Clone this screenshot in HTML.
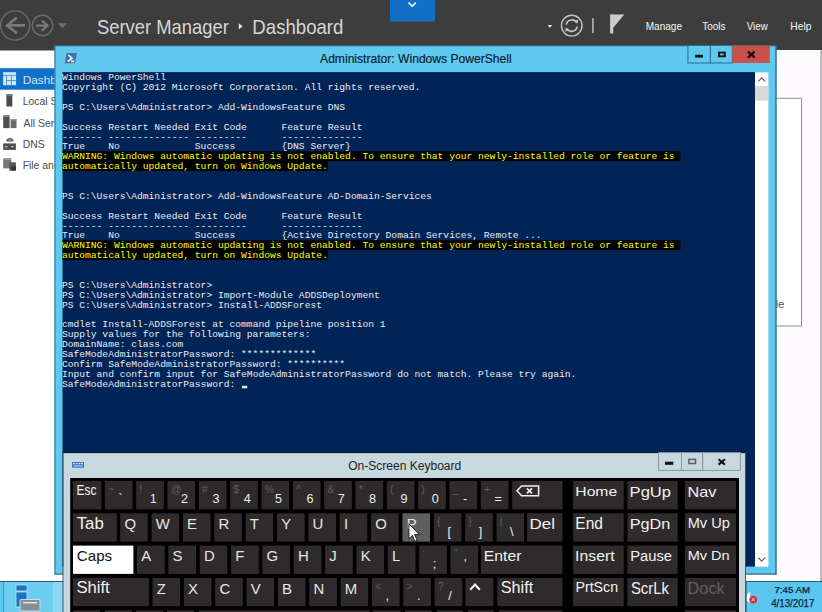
<!DOCTYPE html><html><head><meta charset="utf-8"><style>*{margin:0;padding:0}html,body{width:822px;height:612px;overflow:hidden;background:#fff}svg{display:block;font-family:"Liberation Sans",sans-serif}.m{font-family:"Liberation Mono",monospace}</style></head><body>
<svg width="822" height="612" viewBox="0 0 822 612">
<rect x="0.00" y="0.00" width="822.00" height="612.00" fill="#ffffff" />
<rect x="0.00" y="0.00" width="822.00" height="50.50" fill="#3e3d3d" />
<circle cx="15.1" cy="25.5" r="14.6" fill="none" stroke="#6b6b6b" stroke-width="1.4"/>
<path d="M7 25.4H25M16.8 17.5L7.2 25.4L16.8 33.3" fill="none" stroke="#7a7a7a" stroke-width="2.6" stroke-linejoin="miter"/>
<circle cx="42.5" cy="25.5" r="10.2" fill="none" stroke="#6b6b6b" stroke-width="1.4"/>
<path d="M36 25.6H48M41.8 20.6L47.6 25.6L41.8 30.6" fill="none" stroke="#7a7a7a" stroke-width="2.1"/>
<path d="M57.4 23.3H67.4L62.4 27.9Z" fill="#6f6f6f"/>
<text x="96.97" y="33.70" font-size="20.93" fill="#d6d6d6" textLength="131.80" lengthAdjust="spacingAndGlyphs" >Server Manager</text>
<path d="M238.8 23.2L242.7 26.35L238.8 29.5Z" fill="#e6e6e6"/>
<text x="252.36" y="33.60" font-size="20.78" fill="#d6d6d6" textLength="91.04" lengthAdjust="spacingAndGlyphs" >Dashboard</text>
<rect x="390.00" y="0.00" width="45.00" height="21.50" fill="#1170c6" />
<path d="M408.6 2.6L412.2 6.2L415.8 2.6" fill="none" stroke="#ffffff" stroke-width="1.5"/>
<path d="M547.7 25.1H552.2L549.95 27.7Z" fill="#e8e8e8"/>
<circle cx="571.75" cy="25.6" r="10.3" fill="none" stroke="#c4c4c4" stroke-width="1.4"/>
<path d="M566.3 24.6A5.6 5.6 0 0 1 576.6 22.6M577.2 26.6A5.6 5.6 0 0 1 566.9 28.6" fill="none" stroke="#c4c4c4" stroke-width="1.7"/>
<path d="M573.9 21.2L577.8 23.6L578.2 19.4Z M569.6 30L565.7 27.6L565.3 31.8Z" fill="#c4c4c4"/>
<rect x="592.20" y="18.20" width="1.40" height="14.80" fill="#c8c8c8" />
<rect x="610.10" y="14.40" width="3.10" height="19.10" fill="#cdcdcd" />
<path d="M613 14.4H624.3L613 28Z" fill="#cdcdcd"/>
<text x="645.77" y="29.50" font-size="10.32" fill="#f6f6f6" textLength="36.27" lengthAdjust="spacingAndGlyphs" >Manage</text>
<text x="702.17" y="29.50" font-size="10.32" fill="#f6f6f6" textLength="23.37" lengthAdjust="spacingAndGlyphs" >Tools</text>
<text x="746.75" y="29.50" font-size="10.32" fill="#f6f6f6" textLength="21.02" lengthAdjust="spacingAndGlyphs" >View</text>
<text x="790.35" y="29.50" font-size="10.32" fill="#f6f6f6" textLength="21.07" lengthAdjust="spacingAndGlyphs" >Help</text>
<rect x="0.00" y="68.20" width="56.00" height="21.50" fill="#116fc5" />
<rect x="3.1" y="72.2" width="13" height="13" fill="#c9eafc"/><g fill="#4a7cb8"><rect x="3.1" y="74.9" width="13" height="0.8"/><rect x="6.1" y="75.5" width="0.8" height="9.7"/><rect x="10.9" y="75.5" width="0.8" height="9.7"/><rect x="6.1" y="80" width="10" height="0.8"/></g>
<text x="22.73" y="83.60" font-size="10.17" fill="#cfe6fa" textLength="57.64" lengthAdjust="spacingAndGlyphs" >Dashboard</text>
<text x="22.64" y="104.80" font-size="11.20" fill="#4a4a4a" textLength="58.47" lengthAdjust="spacingAndGlyphs" >Local Server</text>
<text x="23.47" y="127.00" font-size="11.20" fill="#4a4a4a" textLength="50.36" lengthAdjust="spacingAndGlyphs" >All Servers</text>
<text x="22.64" y="147.90" font-size="11.20" fill="#4a4a4a" textLength="21.99" lengthAdjust="spacingAndGlyphs" >DNS</text>
<text x="22.64" y="169.20" font-size="11.20" fill="#4a4a4a" textLength="119.27" lengthAdjust="spacingAndGlyphs" >File and Storage Services</text>
<rect x="6.4" y="94.2" width="5.9" height="12.3" fill="#4a4a4a"/><rect x="6.4" y="94.2" width="5.9" height="2" fill="#7a7a7a"/>
<rect x="3.2" y="115.3" width="6.4" height="12.8" fill="#505050"/><rect x="3.2" y="115.3" width="6.4" height="1.6" fill="#8a8a8a"/><rect x="10.6" y="119" width="5.9" height="9.1" fill="#6a6a6a"/><rect x="10.6" y="119" width="5.9" height="1.4" fill="#999"/>
<path d="M6.3 141.5A3.6 3.6 0 0 1 13.5 141.5Z" fill="#5a5a5a"/><circle cx="9.9" cy="140" r="1.6" fill="#888"/><rect x="3.2" y="143.4" width="12.7" height="6.5" fill="#4e4e4e"/><rect x="5" y="146.2" width="2.5" height="1" fill="#ddd"/><rect x="11.2" y="146.2" width="2.5" height="1" fill="#ddd"/>
<rect x="3.2" y="158.4" width="8" height="10" fill="#777"/><rect x="3.2" y="158.4" width="8" height="1.5" fill="#999"/><rect x="9.3" y="162.3" width="6.6" height="8.3" fill="#555"/><rect x="11.5" y="166.5" width="4.4" height="4.1" fill="#333"/>
<rect x="776.00" y="50.00" width="46.00" height="531.00" fill="#fdfbfd" />
<path d="M776 98.3H801.5V326H776" fill="#ffffff" stroke="#8f8f8f" stroke-width="1"/>
<text x="775.52" y="307.50" font-size="10.50" fill="#555555" textLength="8.98" lengthAdjust="spacingAndGlyphs" >le</text>
<rect x="820.20" y="50.50" width="1.80" height="530.50" fill="#b6b3b6" />
<rect x="54.50" y="45.80" width="722.00" height="528.70" fill="#60c9ef" />
<rect x="54.50" y="45.80" width="1.00" height="528.70" fill="#2f6f8f" />
<rect x="54.50" y="45.50" width="722.00" height="0.80" fill="#2f6f8f" />
<rect x="775.50" y="45.80" width="1.00" height="528.70" fill="#1f4a60" />
<rect x="54.50" y="573.60" width="722.00" height="0.90" fill="#1f4a60" />
<path d="M66.2 52.5H77.5L75.4 63.8H64.1Z" fill="#3577b0" stroke="#8cc4e6" stroke-width="0.8"/>
<path d="M68.3 55L72 58.2L67.7 61.5" fill="none" stroke="#ffffff" stroke-width="1.6"/>
<rect x="71.20" y="60.50" width="3.00" height="1.70" fill="#ffffff" />
<text x="320.07" y="63.40" font-size="13.23" fill="#0a1f2e" textLength="191.64" lengthAdjust="spacingAndGlyphs" stroke="#0a1f2e" stroke-width="0.2">Administrator: Windows PowerShell</text>
<rect x="687.9" y="45.5" width="22.5" height="17.5" fill="#60c9ef" stroke="#2b6f93" stroke-width="1"/>
<rect x="710.4" y="45.5" width="21.9" height="17.5" fill="#60c9ef" stroke="#2b6f93" stroke-width="1"/>
<rect x="732.30" y="45.50" width="37.50" height="17.50" fill="#c9504b" />
<rect x="695.20" y="54.80" width="7.80" height="2.80" fill="#101010" />
<rect x="719" y="52.6" width="5.8" height="3.7" fill="none" stroke="#101010" stroke-width="1.9"/>
<path d="M748 51.6L754.6 57.6M754.6 51.6L748 57.6" stroke="#101010" stroke-width="2.4"/>
<rect x="62.50" y="72.40" width="692.50" height="494.20" fill="#012456" />
<rect x="62.50" y="72.40" width="692.50" height="0.90" fill="#001c48" />
<text class="m" x="61.90" y="80.30" font-size="9.65" fill="#eeedf0" textLength="104.04" lengthAdjust="spacingAndGlyphs" xml:space="preserve">Windows PowerShell</text>
<text class="m" x="61.90" y="90.18" font-size="9.65" fill="#eeedf0" textLength="358.36" lengthAdjust="spacingAndGlyphs" xml:space="preserve">Copyright (C) 2012 Microsoft Corporation. All rights reserved.</text>
<text class="m" x="61.90" y="109.94" font-size="9.65" fill="#eeedf0" textLength="283.22" lengthAdjust="spacingAndGlyphs" xml:space="preserve">PS C:\Users\Administrator&gt; Add-WindowsFeature DNS</text>
<text class="m" x="61.90" y="129.70" font-size="9.65" fill="#eeedf0" textLength="300.56" lengthAdjust="spacingAndGlyphs" xml:space="preserve">Success Restart Needed Exit Code      Feature Result</text>
<text class="m" x="61.90" y="139.58" font-size="9.65" fill="#eeedf0" textLength="300.56" lengthAdjust="spacingAndGlyphs" xml:space="preserve">------- -------------- ---------      --------------</text>
<text class="m" x="61.90" y="149.46" font-size="9.65" fill="#eeedf0" textLength="289.00" lengthAdjust="spacingAndGlyphs" xml:space="preserve">True    No             Success        {DNS Server}</text>
<rect x="62.60" y="151.24" width="617.76" height="9.88" fill="#000000" />
<text class="m" x="61.90" y="159.34" font-size="9.65" fill="#ffff00" textLength="618.46" lengthAdjust="spacingAndGlyphs" xml:space="preserve">WARNING: Windows automatic updating is not enabled. To ensure that your newly-installed role or feature is </text>
<rect x="62.60" y="161.12" width="265.18" height="9.88" fill="#000000" />
<text class="m" x="61.90" y="169.22" font-size="9.65" fill="#ffff00" textLength="265.88" lengthAdjust="spacingAndGlyphs" xml:space="preserve">automatically updated, turn on Windows Update.</text>
<text class="m" x="61.90" y="198.86" font-size="9.65" fill="#eeedf0" textLength="369.92" lengthAdjust="spacingAndGlyphs" xml:space="preserve">PS C:\Users\Administrator&gt; Add-WindowsFeature AD-Domain-Services</text>
<text class="m" x="61.90" y="218.62" font-size="9.65" fill="#eeedf0" textLength="300.56" lengthAdjust="spacingAndGlyphs" xml:space="preserve">Success Restart Needed Exit Code      Feature Result</text>
<text class="m" x="61.90" y="228.50" font-size="9.65" fill="#eeedf0" textLength="300.56" lengthAdjust="spacingAndGlyphs" xml:space="preserve">------- -------------- ---------      --------------</text>
<text class="m" x="61.90" y="238.38" font-size="9.65" fill="#eeedf0" textLength="479.74" lengthAdjust="spacingAndGlyphs" xml:space="preserve">True    No             Success        {Active Directory Domain Services, Remote ...</text>
<rect x="62.60" y="240.16" width="617.76" height="9.88" fill="#000000" />
<text class="m" x="61.90" y="248.26" font-size="9.65" fill="#ffff00" textLength="618.46" lengthAdjust="spacingAndGlyphs" xml:space="preserve">WARNING: Windows automatic updating is not enabled. To ensure that your newly-installed role or feature is </text>
<rect x="62.60" y="250.04" width="265.18" height="9.88" fill="#000000" />
<text class="m" x="61.90" y="258.14" font-size="9.65" fill="#ffff00" textLength="265.88" lengthAdjust="spacingAndGlyphs" xml:space="preserve">automatically updated, turn on Windows Update.</text>
<text class="m" x="61.90" y="287.78" font-size="9.65" fill="#eeedf0" textLength="150.28" lengthAdjust="spacingAndGlyphs" xml:space="preserve">PS C:\Users\Administrator&gt;</text>
<text class="m" x="61.90" y="297.66" font-size="9.65" fill="#eeedf0" textLength="317.90" lengthAdjust="spacingAndGlyphs" xml:space="preserve">PS C:\Users\Administrator&gt; Import-Module ADDSDeployment</text>
<text class="m" x="61.90" y="307.54" font-size="9.65" fill="#eeedf0" textLength="260.10" lengthAdjust="spacingAndGlyphs" xml:space="preserve">PS C:\Users\Administrator&gt; Install-ADDSForest</text>
<text class="m" x="61.90" y="327.30" font-size="9.65" fill="#eeedf0" textLength="323.68" lengthAdjust="spacingAndGlyphs" xml:space="preserve">cmdlet Install-ADDSForest at command pipeline position 1</text>
<text class="m" x="61.90" y="337.18" font-size="9.65" fill="#eeedf0" textLength="248.54" lengthAdjust="spacingAndGlyphs" xml:space="preserve">Supply values for the following parameters:</text>
<text class="m" x="61.90" y="347.06" font-size="9.65" fill="#eeedf0" textLength="121.38" lengthAdjust="spacingAndGlyphs" xml:space="preserve">DomainName: class.com</text>
<text class="m" x="61.90" y="356.94" font-size="9.65" fill="#eeedf0" textLength="254.32" lengthAdjust="spacingAndGlyphs" xml:space="preserve">SafeModeAdministratorPassword: *************</text>
<text class="m" x="61.90" y="366.82" font-size="9.65" fill="#eeedf0" textLength="283.22" lengthAdjust="spacingAndGlyphs" xml:space="preserve">Confirm SafeModeAdministratorPassword: **********</text>
<text class="m" x="61.90" y="376.70" font-size="9.65" fill="#eeedf0" textLength="514.42" lengthAdjust="spacingAndGlyphs" xml:space="preserve">Input and confirm input for SafeModeAdministratorPassword do not match. Please try again.</text>
<text class="m" x="61.90" y="386.58" font-size="9.65" fill="#eeedf0" textLength="179.18" lengthAdjust="spacingAndGlyphs" xml:space="preserve">SafeModeAdministratorPassword: </text>
<rect x="241.88" y="385.78" width="5.38" height="2.50" fill="#d8f0d0" />
<rect x="755.00" y="72.40" width="13.40" height="494.20" fill="#ffffff" />
<rect x="755.00" y="86.00" width="13.40" height="14.60" fill="#d9d9d9" />
<path d="M758.3 81.3L761.7 77.9L765.1 81.3" fill="none" stroke="#606060" stroke-width="1.2"/>
<path d="M758.3 557.7L761.7 561.1L765.1 557.7" fill="none" stroke="#606060" stroke-width="1.2"/>
<rect x="755.00" y="553.40" width="13.40" height="0.50" fill="#e6e6e6" />
<rect x="0.00" y="581.00" width="822.00" height="31.00" fill="#5ac6ee" />
<rect x="0.00" y="581.00" width="822.00" height="1.00" fill="#2c5b74" />
<rect x="3.00" y="582.00" width="51.00" height="30.00" fill="#6ccdf0" />
<rect x="3.00" y="582.00" width="0.80" height="30.00" fill="#3f88ad" />
<rect x="53.20" y="582.00" width="0.80" height="30.00" fill="#9fdcf4" />
<rect x="54.00" y="582.00" width="9.50" height="30.00" fill="#8fd6f2" />
<rect x="16" y="585" width="11" height="6" fill="#1d73c6" stroke="#b9e4f8" stroke-width="0.8"/><rect x="16" y="592" width="11" height="15" fill="#1d73c6" stroke="#b9e4f8" stroke-width="0.8"/>
<rect x="20" y="599.5" width="20" height="11.5" rx="1" fill="#8a8f94" stroke="#d5eef9" stroke-width="0.8"/><rect x="23" y="602" width="14" height="1.4" fill="#e8e8e8"/>
<text x="774.51" y="593.40" font-size="8.72" fill="#08263a" textLength="35.70" lengthAdjust="spacingAndGlyphs" stroke="#08263a" stroke-width="0.25">7:45 AM</text>
<text x="771.18" y="607.40" font-size="10.17" fill="#08263a" textLength="43.22" lengthAdjust="spacingAndGlyphs" stroke="#08263a" stroke-width="0.25">4/13/2017</text>
<path d="M746.6 594.5L750.2 591.8V603L746.6 600.5Z" fill="#ffffff"/><rect x="745.4" y="581" width="1.1" height="31" fill="#35566a"/><circle cx="753.2" cy="599.6" r="3.9" fill="#c8343c"/><path d="M751.6 598L754.8 601.2M754.8 598L751.6 601.2" stroke="#ffd8d8" stroke-width="1"/>
<rect x="63.20" y="452.60" width="682.60" height="159.40" fill="#c7d8df" />
<rect x="63.20" y="452.10" width="682.60" height="1.00" fill="#050d18" />
<rect x="745.20" y="452.10" width="0.80" height="159.90" fill="#2a3a44" />
<rect x="62.60" y="452.10" width="0.80" height="159.90" fill="#2a3a44" />
<text x="348.23" y="469.70" font-size="12.65" fill="#1c252b" textLength="113.04" lengthAdjust="spacingAndGlyphs" >On-Screen Keyboard</text>
<rect x="72" y="462" width="12" height="5.7" fill="#3a7ac8"/><g fill="#cfe6fb"><rect x="73" y="463" width="1.8" height="1.2"/><rect x="75.8" y="463" width="1.8" height="1.2"/><rect x="78.6" y="463" width="1.8" height="1.2"/><rect x="81.2" y="463" width="1.8" height="1.2"/><rect x="73.5" y="465.2" width="9" height="1.3" fill="#9cc8f2"/></g>
<rect x="658.5" y="452.6" width="23" height="17.8" fill="#c7d8df" stroke="#8b969d" stroke-width="1"/>
<rect x="681.5" y="452.6" width="21.2" height="17.8" fill="#c7d8df" stroke="#8b969d" stroke-width="1"/>
<rect x="702.7" y="452.6" width="37.7" height="17.8" fill="#c7d8df" stroke="#8b969d" stroke-width="1"/>
<rect x="665.00" y="461.70" width="8.30" height="3.10" fill="#121212" />
<rect x="688.9" y="459.4" width="6.6" height="4.1" fill="none" stroke="#606060" stroke-width="1.5"/>
<path d="M718.6 459.2L724.9 464.6M724.9 459.2L718.6 464.6" stroke="#121212" stroke-width="2.1"/>
<rect x="70.20" y="478.00" width="668.80" height="134.00" fill="#000000" />
<rect x="73.00" y="481.00" width="28.40" height="28.30" fill="#2f2b2c" />
<text x="76.62" y="495.30" font-size="15.12" fill="#f2f2f2" textLength="19.80" lengthAdjust="spacingAndGlyphs" >Esc</text>
<rect x="104.83" y="481.00" width="27.70" height="28.30" fill="#2f2b2c" />
<text x="118.43" y="503.40" font-size="12.6" fill="#ececec">`</text>
<text x="108.03" y="492.80" font-size="10.5" fill="#5e5e5e">~</text>
<rect x="136.16" y="481.00" width="27.70" height="28.30" fill="#2f2b2c" />
<text x="149.76" y="503.40" font-size="12.6" fill="#ececec">1</text>
<text x="139.36" y="492.80" font-size="10.5" fill="#5e5e5e">!</text>
<rect x="167.49" y="481.00" width="27.70" height="28.30" fill="#2f2b2c" />
<text x="181.09" y="503.40" font-size="12.6" fill="#ececec">2</text>
<text x="170.69" y="492.80" font-size="10.5" fill="#5e5e5e">@</text>
<rect x="198.82" y="481.00" width="27.70" height="28.30" fill="#2f2b2c" />
<text x="212.42" y="503.40" font-size="12.6" fill="#ececec">3</text>
<text x="202.02" y="492.80" font-size="10.5" fill="#5e5e5e">#</text>
<rect x="230.15" y="481.00" width="27.70" height="28.30" fill="#2f2b2c" />
<text x="243.75" y="503.40" font-size="12.6" fill="#ececec">4</text>
<text x="233.35" y="492.80" font-size="10.5" fill="#5e5e5e">$</text>
<rect x="261.48" y="481.00" width="27.70" height="28.30" fill="#2f2b2c" />
<text x="275.08" y="503.40" font-size="12.6" fill="#ececec">5</text>
<text x="264.68" y="492.80" font-size="10.5" fill="#5e5e5e">%</text>
<rect x="292.81" y="481.00" width="27.70" height="28.30" fill="#2f2b2c" />
<text x="306.41" y="503.40" font-size="12.6" fill="#ececec">6</text>
<text x="296.01" y="492.80" font-size="10.5" fill="#5e5e5e">^</text>
<rect x="324.14" y="481.00" width="27.70" height="28.30" fill="#2f2b2c" />
<text x="337.74" y="503.40" font-size="12.6" fill="#ececec">7</text>
<text x="327.34" y="492.80" font-size="10.5" fill="#5e5e5e">&amp;</text>
<rect x="355.47" y="481.00" width="27.70" height="28.30" fill="#2f2b2c" />
<text x="369.07" y="503.40" font-size="12.6" fill="#ececec">8</text>
<text x="358.67" y="492.80" font-size="10.5" fill="#5e5e5e">*</text>
<rect x="386.80" y="481.00" width="27.70" height="28.30" fill="#2f2b2c" />
<text x="400.40" y="503.40" font-size="12.6" fill="#ececec">9</text>
<text x="390.00" y="492.80" font-size="10.5" fill="#5e5e5e">(</text>
<rect x="418.13" y="481.00" width="27.70" height="28.30" fill="#2f2b2c" />
<text x="431.73" y="503.40" font-size="12.6" fill="#ececec">0</text>
<text x="421.33" y="492.80" font-size="10.5" fill="#5e5e5e">)</text>
<rect x="449.46" y="481.00" width="27.70" height="28.30" fill="#2f2b2c" />
<text x="463.06" y="503.40" font-size="12.6" fill="#ececec">-</text>
<text x="452.66" y="492.80" font-size="10.5" fill="#5e5e5e">_</text>
<rect x="480.79" y="481.00" width="27.70" height="28.30" fill="#2f2b2c" />
<text x="494.39" y="503.40" font-size="12.6" fill="#ececec">=</text>
<text x="483.99" y="492.80" font-size="10.5" fill="#5e5e5e">+</text>
<rect x="512.20" y="481.00" width="50.30" height="28.30" fill="#2f2b2c" />
<path d="M517 490.85L521.6 485.9H538.6V495.8H521.6Z" fill="none" stroke="#f2f2f2" stroke-width="1.5"/><path d="M527 488.4L532 493.3M532 488.4L527 493.3" stroke="#f2f2f2" stroke-width="1.7"/>
<rect x="73.00" y="513.30" width="43.90" height="28.30" fill="#2f2b2c" />
<text x="76.72" y="528.60" font-size="16.42" fill="#f2f2f2" textLength="27.09" lengthAdjust="spacingAndGlyphs" >Tab</text>
<rect x="120.20" y="513.30" width="27.60" height="28.30" fill="#2f2b2c" />
<text x="124.40" y="528.90" font-size="14.9" fill="#e6e6e6">Q</text>
<rect x="151.56" y="513.30" width="27.60" height="28.30" fill="#2f2b2c" />
<text x="155.76" y="528.90" font-size="14.9" fill="#e6e6e6">W</text>
<rect x="182.92" y="513.30" width="27.60" height="28.30" fill="#2f2b2c" />
<text x="187.12" y="528.90" font-size="14.9" fill="#e6e6e6">E</text>
<rect x="214.28" y="513.30" width="27.60" height="28.30" fill="#2f2b2c" />
<text x="218.48" y="528.90" font-size="14.9" fill="#e6e6e6">R</text>
<rect x="245.64" y="513.30" width="27.60" height="28.30" fill="#2f2b2c" />
<text x="249.84" y="528.90" font-size="14.9" fill="#e6e6e6">T</text>
<rect x="277.00" y="513.30" width="27.60" height="28.30" fill="#2f2b2c" />
<text x="281.20" y="528.90" font-size="14.9" fill="#e6e6e6">Y</text>
<rect x="308.36" y="513.30" width="27.60" height="28.30" fill="#2f2b2c" />
<text x="312.56" y="528.90" font-size="14.9" fill="#e6e6e6">U</text>
<rect x="339.72" y="513.30" width="27.60" height="28.30" fill="#2f2b2c" />
<text x="343.92" y="528.90" font-size="14.9" fill="#e6e6e6">I</text>
<rect x="371.08" y="513.30" width="27.60" height="28.30" fill="#2f2b2c" />
<text x="375.28" y="528.90" font-size="14.9" fill="#e6e6e6">O</text>
<rect x="402.44" y="513.30" width="27.60" height="28.30" fill="#5f5f5f" />
<text x="406.64" y="528.90" font-size="14.9" fill="#e6e6e6">P</text>
<rect x="433.80" y="513.30" width="27.60" height="28.30" fill="#2f2b2c" />
<text x="447.40" y="535.70" font-size="12.6" fill="#ececec">[</text>
<text x="437.00" y="525.10" font-size="10.5" fill="#5e5e5e">{</text>
<rect x="465.16" y="513.30" width="27.60" height="28.30" fill="#2f2b2c" />
<text x="478.76" y="535.70" font-size="12.6" fill="#ececec">]</text>
<text x="468.36" y="525.10" font-size="10.5" fill="#5e5e5e">}</text>
<rect x="496.52" y="513.30" width="27.60" height="28.30" fill="#2f2b2c" />
<text x="510.12" y="535.70" font-size="12.6" fill="#ececec">\</text>
<text x="499.72" y="525.10" font-size="10.5" fill="#5e5e5e">|</text>
<rect x="527.00" y="513.30" width="35.50" height="28.30" fill="#2f2b2c" />
<text x="529.50" y="528.70" font-size="15.26" fill="#f2f2f2" textLength="25.45" lengthAdjust="spacingAndGlyphs" >Del</text>
<rect x="73.00" y="545.60" width="60.40" height="28.30" fill="#ffffff" />
<text x="76.84" y="560.60" font-size="14.97" fill="#111111" textLength="35.28" lengthAdjust="spacingAndGlyphs" >Caps</text>
<rect x="137.00" y="545.60" width="27.70" height="28.30" fill="#2f2b2c" />
<text x="141.20" y="561.20" font-size="14.9" fill="#e6e6e6">A</text>
<rect x="168.35" y="545.60" width="27.70" height="28.30" fill="#2f2b2c" />
<text x="172.55" y="561.20" font-size="14.9" fill="#e6e6e6">S</text>
<rect x="199.70" y="545.60" width="27.70" height="28.30" fill="#2f2b2c" />
<text x="203.90" y="561.20" font-size="14.9" fill="#e6e6e6">D</text>
<rect x="231.05" y="545.60" width="27.70" height="28.30" fill="#2f2b2c" />
<text x="235.25" y="561.20" font-size="14.9" fill="#e6e6e6">F</text>
<rect x="262.40" y="545.60" width="27.70" height="28.30" fill="#2f2b2c" />
<text x="266.60" y="561.20" font-size="14.9" fill="#e6e6e6">G</text>
<rect x="293.75" y="545.60" width="27.70" height="28.30" fill="#2f2b2c" />
<text x="297.95" y="561.20" font-size="14.9" fill="#e6e6e6">H</text>
<rect x="325.10" y="545.60" width="27.70" height="28.30" fill="#2f2b2c" />
<text x="329.30" y="561.20" font-size="14.9" fill="#e6e6e6">J</text>
<rect x="356.45" y="545.60" width="27.70" height="28.30" fill="#2f2b2c" />
<text x="360.65" y="561.20" font-size="14.9" fill="#e6e6e6">K</text>
<rect x="387.80" y="545.60" width="27.70" height="28.30" fill="#2f2b2c" />
<text x="392.00" y="561.20" font-size="14.9" fill="#e6e6e6">L</text>
<rect x="419.15" y="545.60" width="27.70" height="28.30" fill="#2f2b2c" />
<text x="432.75" y="568.00" font-size="12.6" fill="#ececec">;</text>
<text x="422.35" y="557.40" font-size="10.5" fill="#5e5e5e">:</text>
<rect x="450.50" y="545.60" width="27.70" height="28.30" fill="#2f2b2c" />
<text x="464.10" y="568.00" font-size="12.6" fill="#ececec">'</text>
<text x="453.70" y="557.40" font-size="10.5" fill="#5e5e5e">"</text>
<rect x="481.00" y="545.60" width="81.50" height="28.30" fill="#2f2b2c" />
<text x="483.70" y="561.20" font-size="15.55" fill="#f2f2f2" textLength="37.74" lengthAdjust="spacingAndGlyphs" >Enter</text>
<rect x="73.00" y="577.90" width="75.90" height="28.30" fill="#2f2b2c" />
<text x="76.45" y="593.00" font-size="16.13" fill="#f2f2f2" textLength="33.29" lengthAdjust="spacingAndGlyphs" >Shift</text>
<rect x="152.50" y="577.90" width="27.60" height="28.30" fill="#2f2b2c" />
<text x="156.70" y="593.50" font-size="14.9" fill="#e6e6e6">Z</text>
<rect x="183.85" y="577.90" width="27.60" height="28.30" fill="#2f2b2c" />
<text x="188.05" y="593.50" font-size="14.9" fill="#e6e6e6">X</text>
<rect x="215.20" y="577.90" width="27.60" height="28.30" fill="#2f2b2c" />
<text x="219.40" y="593.50" font-size="14.9" fill="#e6e6e6">C</text>
<rect x="246.55" y="577.90" width="27.60" height="28.30" fill="#2f2b2c" />
<text x="250.75" y="593.50" font-size="14.9" fill="#e6e6e6">V</text>
<rect x="277.90" y="577.90" width="27.60" height="28.30" fill="#2f2b2c" />
<text x="282.10" y="593.50" font-size="14.9" fill="#e6e6e6">B</text>
<rect x="309.25" y="577.90" width="27.60" height="28.30" fill="#2f2b2c" />
<text x="313.45" y="593.50" font-size="14.9" fill="#e6e6e6">N</text>
<rect x="340.60" y="577.90" width="27.60" height="28.30" fill="#2f2b2c" />
<text x="344.80" y="593.50" font-size="14.9" fill="#e6e6e6">M</text>
<rect x="371.95" y="577.90" width="27.60" height="28.30" fill="#2f2b2c" />
<text x="385.55" y="600.30" font-size="12.6" fill="#ececec">,</text>
<text x="375.15" y="589.70" font-size="10.5" fill="#5e5e5e">&lt;</text>
<rect x="403.30" y="577.90" width="27.60" height="28.30" fill="#2f2b2c" />
<text x="416.90" y="600.30" font-size="12.6" fill="#ececec">.</text>
<text x="406.50" y="589.70" font-size="10.5" fill="#5e5e5e">&gt;</text>
<rect x="434.65" y="577.90" width="27.60" height="28.30" fill="#2f2b2c" />
<text x="448.25" y="600.30" font-size="12.6" fill="#ececec">/</text>
<text x="437.85" y="589.70" font-size="10.5" fill="#5e5e5e">?</text>
<rect x="465.50" y="577.90" width="27.80" height="28.30" fill="#2f2b2c" />
<path d="M470.2 589.8L475 584.6L479.8 589.8" fill="none" stroke="#f2f2f2" stroke-width="2.2"/>
<rect x="497.40" y="577.90" width="65.10" height="28.30" fill="#2f2b2c" />
<text x="500.77" y="593.00" font-size="16.13" fill="#f2f2f2" textLength="32.47" lengthAdjust="spacingAndGlyphs" >Shift</text>
<rect x="73.40" y="610.20" width="26.70" height="28.30" fill="#2f2b2c" />
<rect x="105.00" y="610.20" width="26.80" height="28.30" fill="#2f2b2c" />
<rect x="135.90" y="610.20" width="27.50" height="28.30" fill="#2f2b2c" />
<rect x="167.00" y="610.20" width="27.30" height="28.30" fill="#2f2b2c" />
<rect x="198.70" y="610.20" width="170.80" height="28.30" fill="#2f2b2c" />
<rect x="373.00" y="610.20" width="27.50" height="28.30" fill="#2f2b2c" />
<rect x="405.00" y="610.20" width="26.50" height="28.30" fill="#2f2b2c" />
<rect x="437.00" y="610.20" width="25.60" height="28.30" fill="#2f2b2c" />
<rect x="468.00" y="610.20" width="25.60" height="28.30" fill="#2f2b2c" />
<rect x="499.00" y="610.20" width="63.50" height="28.30" fill="#2f2b2c" />
<rect x="685.00" y="610.20" width="51.10" height="28.30" fill="#2f2b2c" />
<rect x="573.10" y="481.00" width="50.60" height="28.30" fill="#2f2b2c" />
<rect x="627.40" y="481.00" width="50.30" height="28.30" fill="#2f2b2c" />
<rect x="685.00" y="481.00" width="51.10" height="28.30" fill="#2f2b2c" />
<rect x="573.10" y="513.30" width="50.60" height="28.30" fill="#2f2b2c" />
<rect x="627.40" y="513.30" width="50.30" height="28.30" fill="#2f2b2c" />
<rect x="685.00" y="513.30" width="51.10" height="28.30" fill="#2f2b2c" />
<rect x="573.10" y="545.60" width="50.60" height="28.30" fill="#2f2b2c" />
<rect x="627.40" y="545.60" width="50.30" height="28.30" fill="#2f2b2c" />
<rect x="685.00" y="545.60" width="51.10" height="28.30" fill="#2f2b2c" />
<rect x="573.10" y="577.90" width="50.60" height="28.30" fill="#2f2b2c" />
<rect x="627.40" y="577.90" width="50.30" height="28.30" fill="#2f2b2c" />
<rect x="685.00" y="577.90" width="51.10" height="28.30" fill="#2f2b2c" />
<text x="575.31" y="495.60" font-size="12.94" fill="#f2f2f2" textLength="41.86" lengthAdjust="spacingAndGlyphs" >Home</text>
<text x="629.64" y="497.00" font-size="14.10" fill="#f2f2f2" textLength="41.35" lengthAdjust="spacingAndGlyphs" >PgUp</text>
<text x="687.56" y="497.00" font-size="14.97" fill="#f2f2f2" textLength="28.90" lengthAdjust="spacingAndGlyphs" >Nav</text>
<text x="575.32" y="528.70" font-size="15.99" fill="#f2f2f2" textLength="27.68" lengthAdjust="spacingAndGlyphs" >End</text>
<text x="629.66" y="528.70" font-size="15.55" fill="#f2f2f2" textLength="40.68" lengthAdjust="spacingAndGlyphs" >PgDn</text>
<text x="687.69" y="527.60" font-size="14.97" fill="#f2f2f2" textLength="42.21" lengthAdjust="spacingAndGlyphs" >Mv Up</text>
<text x="575.14" y="560.60" font-size="14.39" fill="#f2f2f2" textLength="39.50" lengthAdjust="spacingAndGlyphs" >Insert</text>
<text x="630.19" y="561.20" font-size="14.39" fill="#f2f2f2" textLength="41.75" lengthAdjust="spacingAndGlyphs" >Pause</text>
<text x="687.70" y="559.50" font-size="11.92" fill="#f2f2f2" textLength="42.03" lengthAdjust="spacingAndGlyphs" >Mv Dn</text>
<text x="575.43" y="591.60" font-size="14.97" fill="#f2f2f2" textLength="42.68" lengthAdjust="spacingAndGlyphs" >PrtScn</text>
<text x="630.93" y="593.70" font-size="16.57" fill="#f2f2f2" textLength="37.99" lengthAdjust="spacingAndGlyphs" >ScrLk</text>
<text x="687.55" y="593.70" font-size="16.57" fill="#5f5f5f" textLength="37.16" lengthAdjust="spacingAndGlyphs" >Dock</text>
<path d="M408.9 523.8V538.8L412.4 535.5L415 541.3L417.2 540.3L414.6 534.6H419.4Z" fill="#ffffff" stroke="#111" stroke-width="0.9"/>
</svg></body></html>
